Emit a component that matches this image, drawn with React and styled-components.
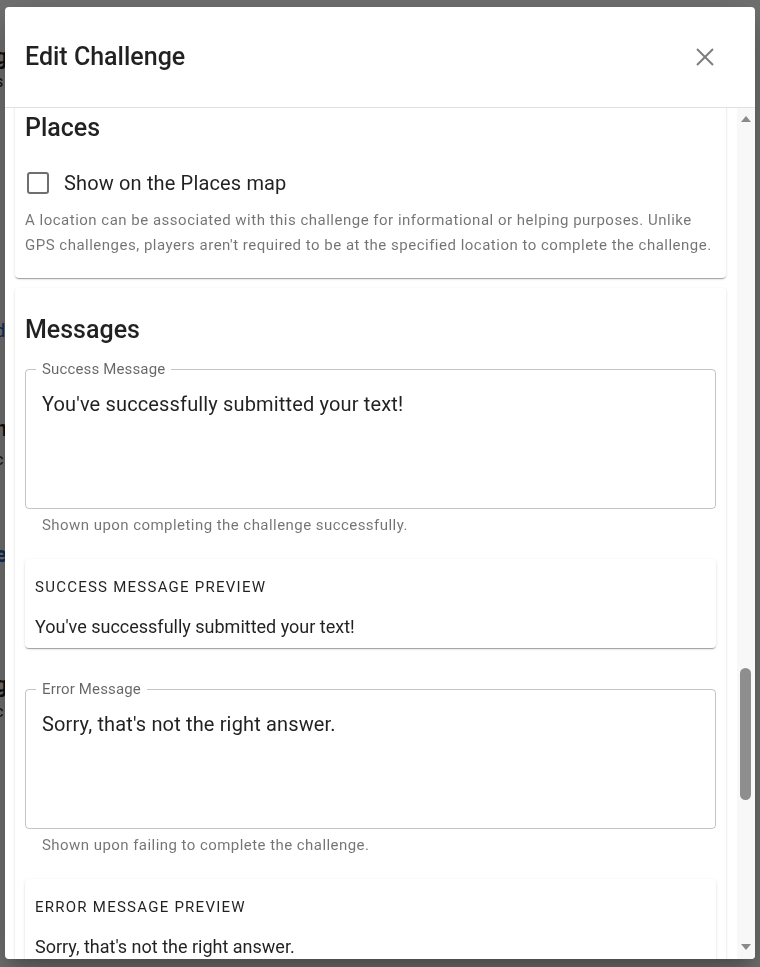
import React from "react";
import styled, { createGlobalStyle } from "styled-components";

const GlobalStyle = createGlobalStyle`
  html, body {
    margin: 0;
    height: 100%;
  }
  body {
    font-family: Roboto, "Liberation Sans", Arial, sans-serif;
    background: #ffffff;
    overflow: hidden;
  }
  * {
    box-sizing: border-box;
  }
`;

const Page = styled.div`
  height: 100vh;
  overflow: hidden;
`;

const PeekColumn = styled.div`
  width: 6px;
  overflow: hidden;
  display: flex;
  flex-direction: column;
`;

const PeekLetter = styled.div`
  margin-top: ${(p) => p.$gap}px;
  margin-left: -5px;
  font-size: ${(p) => p.$size}px;
  line-height: 1;
  font-weight: ${(p) => (p.$bold ? 700 : 400)};
  color: ${(p) => p.$color || "#222"};
  white-space: nowrap;
`;

const Backdrop = styled.div`
  position: fixed;
  inset: 0;
  background: rgba(0, 0, 0, 0.56);
`;

const Dialog = styled.div`
  position: fixed;
  top: 7px;
  left: 5px;
  width: 750px;
  height: 952px;
  background: #fff;
  border-radius: 4px;
  overflow: hidden;
  display: flex;
  flex-direction: column;
  box-shadow: 0 11px 15px -7px rgba(0, 0, 0, 0.2),
    0 24px 38px 3px rgba(0, 0, 0, 0.14), 0 9px 46px 8px rgba(0, 0, 0, 0.12);
`;

const Header = styled.div`
  height: 101px;
  flex-shrink: 0;
  display: flex;
  align-items: center;
  justify-content: space-between;
  padding: 0 30px 0 20px;
  border-bottom: 1px solid #e0e0e0;
`;

const Title = styled.h2`
  margin: 0;
  font-size: 25px;
  line-height: 32px;
  font-weight: 500;
  color: rgba(0, 0, 0, 0.87);
`;

const CloseButton = styled.button`
  width: 40px;
  height: 40px;
  border: none;
  background: transparent;
  padding: 0;
  display: flex;
  align-items: center;
  justify-content: center;
  color: #7d7d7d;
  cursor: pointer;
`;

const Body = styled.div`
  flex: 1;
  min-height: 0;
  display: flex;
`;

const Scroller = styled.div`
  flex: 1;
  overflow: hidden;
`;

const List = styled.div`
  display: flex;
  flex-direction: column;
  gap: 10px;
  padding: 0 11px 0 10px;
  margin-top: -22px;
`;

const Card = styled.section`
  background: #fff;
  border-radius: 4px;
  padding: 26px 10px 20px;
  box-shadow: 0 2px 1px -1px rgba(0, 0, 0, 0.2), 0 1px 1px 0 rgba(0, 0, 0, 0.14),
    0 1px 3px 0 rgba(0, 0, 0, 0.12);
`;

const SectionTitle = styled.h3`
  margin: 0;
  font-size: 25px;
  line-height: 32px;
  font-weight: 500;
  color: rgba(0, 0, 0, 0.87);
`;

const CheckRow = styled.label`
  margin-top: 18px;
  height: 42px;
  display: flex;
  align-items: center;
`;

const CheckBox = styled.span`
  width: 22px;
  height: 22px;
  margin-left: 2px;
  border: 2px solid #6f6f6f;
  border-radius: 3px;
`;

const CheckLabel = styled.span`
  margin-left: 15px;
  font-size: 20px;
  letter-spacing: 0.15px;
  color: rgba(0, 0, 0, 0.87);
`;

const HelpText = styled.p`
  margin: 4px 0 0;
  font-size: 15px;
  line-height: 25px;
  letter-spacing: 0.5px;
  color: rgba(0, 0, 0, 0.55);
`;

const Field = styled.fieldset`
  margin: ${(p) => p.$top}px 0 0;
  padding: 0 16px;
  border: 1px solid rgba(0, 0, 0, 0.23);
  border-radius: 4px;
`;

const Legend = styled.legend`
  margin-left: -6px;
  padding: 0 6px;
  font-size: 15px;
  line-height: 20px;
  letter-spacing: 0.15px;
  color: rgba(0, 0, 0, 0.6);
`;

const FieldValue = styled.div`
  height: 129px;
  padding-top: 12px;
  font-size: 20px;
  line-height: 26px;
  letter-spacing: 0.15px;
  color: rgba(0, 0, 0, 0.87);
`;

const FieldHelper = styled.p`
  margin: 6px 0 0 17px;
  font-size: 15px;
  line-height: 20px;
  letter-spacing: 0.45px;
  color: rgba(0, 0, 0, 0.55);
`;

const PreviewCard = styled.div`
  margin-top: 24px;
  padding: 16px 10px 9px;
  border-radius: 4px;
  background: #fff;
  box-shadow: 0 2px 1px -1px rgba(0, 0, 0, 0.2), 0 1px 1px 0 rgba(0, 0, 0, 0.14),
    0 1px 3px 0 rgba(0, 0, 0, 0.12);
`;

const Overline = styled.div`
  font-size: 15px;
  line-height: 24px;
  letter-spacing: 1.25px;
  text-transform: uppercase;
  color: rgba(0, 0, 0, 0.87);
`;

const PreviewText = styled.div`
  margin-top: 16px;
  font-size: 18px;
  line-height: 24px;
  color: rgba(0, 0, 0, 0.87);
`;

const ScrollBar = styled.div`
  width: 18px;
  flex-shrink: 0;
  background: #f8f8f8;
  display: flex;
  flex-direction: column;
  align-items: center;
`;

const ArrowBox = styled.div`
  height: ${(p) => p.$h}px;
  width: 100%;
  display: flex;
  align-items: center;
  justify-content: center;
  padding-right: 1px;
`;

const Arrow = styled.span`
  width: 0;
  height: 0;
  border-left: 5px solid transparent;
  border-right: 5px solid transparent;
  ${(p) =>
    p.$down
      ? "border-top: 6px solid #8a8a8a;"
      : "border-bottom: 6px solid #8a8a8a;"}
`;

const Track = styled.div`
  flex: 1;
  width: 100%;
  display: flex;
  justify-content: center;
  padding-right: 1px;
`;

const Thumb = styled.div`
  width: 11px;
  height: 132px;
  border-radius: 6px;
  background: #8e8e8e;
`;

function MessageBlock({ label, value, helper, preview, top }) {
  return (
    <>
      <Field $top={top}>
        <Legend>{label}</Legend>
        <FieldValue>{value}</FieldValue>
      </Field>
      <FieldHelper>{helper}</FieldHelper>
      <PreviewCard>
        <Overline>{preview}</Overline>
        <PreviewText>{value}</PreviewText>
      </PreviewCard>
    </>
  );
}

const peek = [
  { gap: 46, size: 22, bold: true, ch: "g" },
  { gap: 6, size: 16, ch: "s" },
  { gap: 232, size: 18, ch: "d", color: "#1f5fbf" },
  { gap: 78, size: 22, bold: true, ch: "n" },
  { gap: 12, size: 16, ch: "c" },
  { gap: 76, size: 22, bold: true, ch: "e", color: "#1f5fbf" },
  { gap: 108, size: 22, bold: true, ch: "g" },
  { gap: 8, size: 16, ch: "c" },
];

export default function App() {
  const thumbOffset = 538;

  return (
    <>
      <GlobalStyle />
      <Page>
        <PeekColumn>
          {peek.map((l, i) => (
            <PeekLetter key={i} $gap={l.gap} $size={l.size} $bold={l.bold} $color={l.color}>
              {l.ch}
            </PeekLetter>
          ))}
        </PeekColumn>
      </Page>
      <Backdrop />
      <Dialog role="dialog">
        <Header>
          <Title>Edit Challenge</Title>
          <CloseButton aria-label="close">
            <svg width="18" height="18" viewBox="0 0 18 18" stroke="currentColor" strokeWidth="1.9">
              <line x1="1" y1="1" x2="17" y2="17" />
              <line x1="17" y1="1" x2="1" y2="17" />
            </svg>
          </CloseButton>
        </Header>
        <Body>
          <Scroller>
            <List>
              <Card>
                <SectionTitle>Places</SectionTitle>
                <CheckRow>
                  <CheckBox />
                  <CheckLabel>Show on the Places map</CheckLabel>
                </CheckRow>
                <HelpText>
                  A location can be associated with this challenge for informational or helping
                  purposes. Unlike GPS challenges, players aren't required to be at the specified
                  location to complete the challenge.
                </HelpText>
              </Card>
              <Card>
                <SectionTitle>Messages</SectionTitle>
                <MessageBlock
                  top={13}
                  label="Success Message"
                  value="You've successfully submitted your text!"
                  helper="Shown upon completing the challenge successfully."
                  preview="Success message preview"
                />
                <MessageBlock
                  top={31}
                  label="Error Message"
                  value="Sorry, that's not the right answer."
                  helper="Shown upon failing to complete the challenge."
                  preview="Error message preview"
                />
              </Card>
            </List>
          </Scroller>
          <ScrollBar>
            <ArrowBox $h={22}>
              <Arrow />
            </ArrowBox>
            <Track>
              <Thumb style={{ marginTop: thumbOffset }} />
            </Track>
            <ArrowBox $h={24}>
              <Arrow $down />
            </ArrowBox>
          </ScrollBar>
        </Body>
      </Dialog>
    </>
  );
}
